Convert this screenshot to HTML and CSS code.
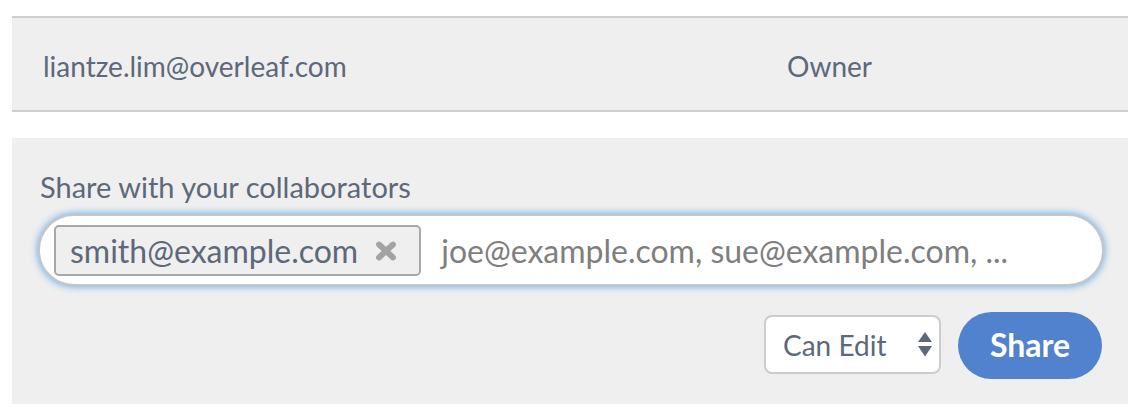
FILE: index.html
```html
<!DOCTYPE html>
<html lang="en">
<head>
<meta charset="utf-8">
<title>Share project</title>
<link rel="stylesheet" href="styles.css">
</head>
<body>
<div class="page">
  <div class="member-row">
    <div class="col-email">liantze.lim@overleaf.com</div>
    <div class="col-role">Owner</div>
  </div>

  <div class="share-panel">
    <label class="share-label">Share with your collaborators</label>
    <div class="email-input">
      <span class="tag">
        <span class="tag-text">smith@example.com</span>
        <svg class="tag-remove" width="22" height="20" viewBox="0 0 22 20" aria-hidden="true">
          <path d="M4 3.5 L18 16.5 M18 3.5 L4 16.5" stroke="#a3a3a3" stroke-width="5.8" stroke-linecap="round" fill="none"/>
        </svg>
      </span>
      <span class="placeholder">joe@example.com, sue@example.com, ...</span>
    </div>
    <div class="actions">
      <div class="perm-select">
        <span class="perm-text">Can Edit</span>
        <svg class="perm-arrows" width="14" height="25" viewBox="0 0 14 25" aria-hidden="true">
          <path d="M7 0 L14 10 L0 10 Z M0 14 L14 14 L7 24.5 Z" fill="#5d6879"/>
        </svg>
      </div>
      <button class="share-btn">Share</button>
    </div>
  </div>
</div>
</body>
</html>
```

FILE: styles.css
```css
html, body {
  margin: 0;
  padding: 0;
  background: #ffffff;
}

body {
  font-family: Lato, "Open Sans", sans-serif;
  font-size: 28px;
  color: #5d6879;
}

.page {
  padding: 16px 12px 0;
}

.member-row {
  display: flex;
  background: #efefef;
  border-top: 2px solid #cfcfcf;
  border-bottom: 2px solid #cfcfcf;
  padding: 29px 0 25px;
  line-height: 38px;
}

.col-email {
  width: 66.6667%;
  padding: 0 31px;
  box-sizing: border-box;
}

.col-role {
  width: 33.3333%;
  padding: 0 31px;
  box-sizing: border-box;
}

.share-panel {
  margin-top: 26px;
  background: #efefef;
  padding: 30px 24px 25px 26px;
  display: flex;
  flex-direction: column;
}

.share-label {
  display: block;
  font-size: 29px;
  line-height: 37px;
  margin-left: 2px;
  margin-bottom: 9px;
}

.email-input {
  display: flex;
  align-items: center;
  height: 72px;
  box-sizing: border-box;
  background: #ffffff;
  border: 2px solid #c6c6c6;
  border-radius: 36px;
  box-shadow: 0 0 7px 1px rgba(102, 175, 233, 0.95);
  padding: 0 14px;
  font-size: 32px;
}

.tag {
  display: flex;
  align-items: center;
  height: 51px;
  box-sizing: border-box;
  border: 2px solid #a8a8a8;
  border-radius: 5px;
  background: #efefef;
  padding: 0 22px 0 14px;
  margin-top: 1px;
}

.tag-text {
  line-height: 38px;
  padding-top: 1px;
}

.tag-remove {
  margin-left: 17px;
  display: block;
}

.placeholder {
  margin-left: 20px;
  color: #7e7e7e;
  line-height: 38px;
  padding-top: 1px;
  white-space: nowrap;
}

.actions {
  display: flex;
  justify-content: flex-end;
  align-items: center;
  gap: 17px;
  margin-top: 26px;
  padding-right: 2px;
}

.perm-select {
  display: flex;
  align-items: center;
  justify-content: space-between;
  width: 177px;
  height: 59px;
  box-sizing: border-box;
  background: #ffffff;
  border: 2px solid #cccccc;
  border-radius: 8px;
  padding: 0 7px 0 17px;
  margin-top: -2px;
}

.perm-text {
  line-height: 36px;
  padding-top: 1px;
}

.perm-arrows {
  display: block;
}

.share-btn {
  width: 144px;
  height: 67px;
  border: none;
  border-radius: 34px;
  background: #5182ce;
  color: #ffffff;
  font-family: Lato, "Open Sans", sans-serif;
  font-weight: 700;
  font-size: 32px;
  padding: 0 0 2px;
  cursor: pointer;
}
```
